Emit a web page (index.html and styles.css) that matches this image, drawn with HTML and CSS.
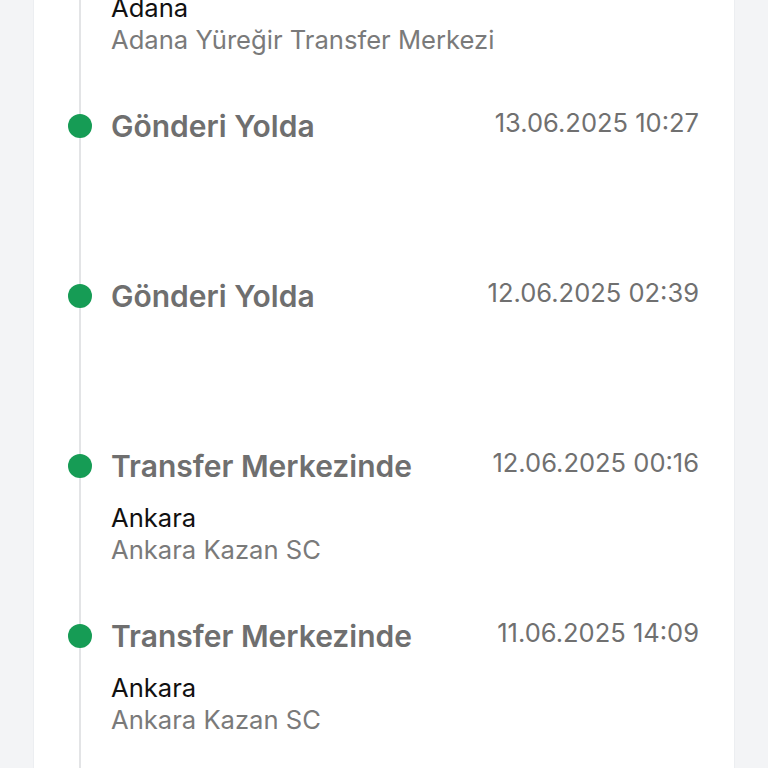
FILE: index.html
```html
<!DOCTYPE html>
<html lang="tr">
<head>
<meta charset="utf-8">
<link rel="stylesheet" href="styles.css">
</head>
<body>
<div class="page">
  <div class="card">
    <ul class="timeline">
      <li class="item">
        <span class="dot"></span>
        <div class="body">
          <div class="head"><span class="title">Transfer Merkezinde</span><span class="date">13.06.2025 08:11</span></div>
          <div class="loc"><div class="city">Adana</div><div class="place">Adana Yüreğir Transfer Merkezi</div></div>
        </div>
      </li>
      <li class="item">
        <span class="dot"></span>
        <div class="body">
          <div class="head"><span class="title">Gönderi Yolda</span><span class="date">13.06.2025 10:27</span></div>
          <div class="loc"></div>
        </div>
      </li>
      <li class="item">
        <span class="dot"></span>
        <div class="body">
          <div class="head"><span class="title">Gönderi Yolda</span><span class="date">12.06.2025 02:39</span></div>
          <div class="loc"></div>
        </div>
      </li>
      <li class="item">
        <span class="dot"></span>
        <div class="body">
          <div class="head"><span class="title">Transfer Merkezinde</span><span class="date">12.06.2025 00:16</span></div>
          <div class="loc"><div class="city">Ankara</div><div class="place">Ankara Kazan SC</div></div>
        </div>
      </li>
      <li class="item">
        <span class="dot"></span>
        <div class="body">
          <div class="head"><span class="title">Transfer Merkezinde</span><span class="date">11.06.2025 14:09</span></div>
          <div class="loc"><div class="city">Ankara</div><div class="place">Ankara Kazan SC</div></div>
        </div>
      </li>
    </ul>
  </div>
</div>
</body>
</html>
```
FILE: styles.css
```css
* { box-sizing: border-box; }
html, body { margin: 0; padding: 0; }
body {
  background: #f3f4f6;
  font-family: Inter, "Noto Sans", sans-serif;
  height: 768px;
  overflow: hidden;
}
.page {
  padding: 0 34px;
}
.card {
  background: #fff;
  box-shadow: 0 0 0 1px #eceef1;
  padding: 0 35px 0 34px;
  min-height: 768px;
  overflow: hidden;
}
.timeline {
  list-style: none;
  margin: -61px 0 0 0;
  padding: 0;
  position: relative;
}
.timeline::before {
  content: "";
  position: absolute;
  left: 11px;
  top: 0;
  bottom: 0;
  width: 2px;
  background: #e3e4e6;
}
.item {
  display: flex;
  gap: 19px;
  padding-bottom: 53px;
  position: relative;
}
.dot {
  flex: 0 0 24px;
  width: 24px;
  height: 24px;
  border-radius: 50%;
  background: #169c55;
  margin-top: 5px;
  position: relative;
  z-index: 1;
}
.body {
  flex: 1;
  min-width: 0;
}
.head {
  display: flex;
  justify-content: space-between;
  align-items: flex-start;
  height: 34px;
}
.title {
  font-size: 30px;
  font-weight: 600;
  line-height: 34px;
  color: #6f6f6f;
}
.date {
  font-size: 25.5px;
  line-height: 28px;
  color: #707070;
}
.loc {
  min-height: 83px;
  padding-top: 19px;
}
.city {
  font-size: 25.6px;
  line-height: 32px;
  color: #111;
}
.place {
  font-size: 25.6px;
  line-height: 32px;
  color: #7a7a7a;
}
```
